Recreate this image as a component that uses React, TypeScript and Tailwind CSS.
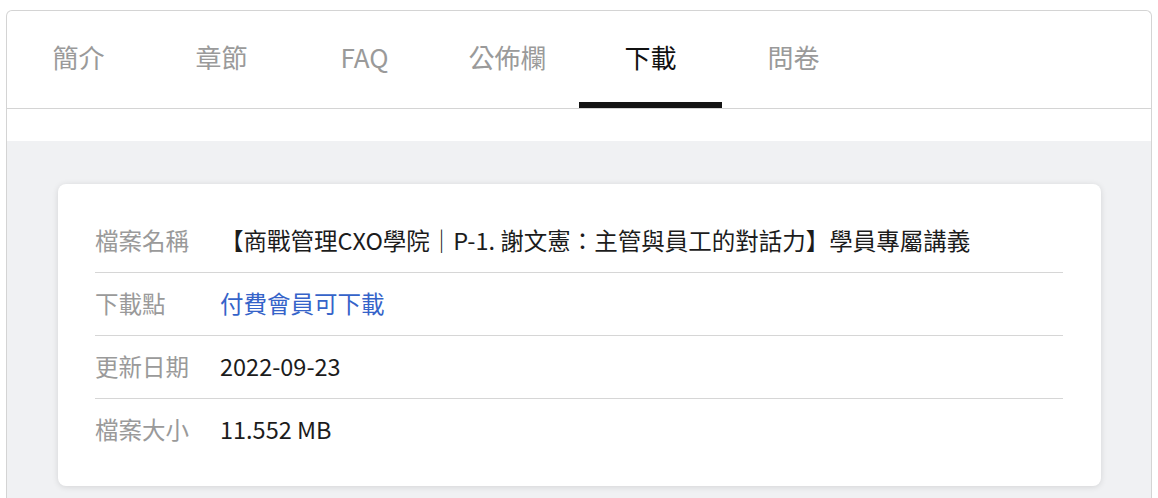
import React from "react";

const tabs = ["簡介", "章節", "FAQ", "公佈欄", "下載", "問卷"];

const rows = [
  { label: "檔案名稱", value: "【商戰管理CXO學院｜P-1. 謝文憲：主管與員工的對話力】學員專屬講義" },
  { label: "下載點", value: "付費會員可下載", link: true },
  { label: "更新日期", value: "2022-09-23" },
  { label: "檔案大小", value: "11.552 MB" },
];

const App = () => {
  return (
    <div
      className="min-h-screen bg-white px-[6px] pt-[10px]"
      style={{ fontFamily: '"Noto Sans CJK TC", "Noto Sans", sans-serif' }}
    >
      <div className="border border-b-0 border-[#d4d4d4] rounded-t-[6px] overflow-hidden">
        <div className="flex h-[98px] border-b border-[#d4d4d4]">
          {tabs.map((t) => {
            const active = t === "下載";
            return (
              <div
                key={t}
                className={
                  "relative w-[143px] flex items-center justify-center text-[26px] " +
                  (active ? "text-[#111]" : "text-[#9a9a9a]")
                }
              >
                <span className="-mt-[6px]">{t}</span>
                {active && <div className="absolute left-0 right-0 bottom-0 h-[6px] bg-[#141414]" />}
              </div>
            );
          })}
        </div>
        <div className="h-[32px] bg-white" />
        <div className="bg-[#f0f1f3] pl-[51px] pr-[50px] pt-[43px] pb-[40px]">
          <div className="bg-white rounded-[8px] shadow-[0_1px_6px_rgba(0,0,0,0.12)] pl-[37px] pr-[38px] pt-[26px] pb-[25px]">
            {rows.map((r, i) => (
              <div
                key={r.label}
                className={
                  "flex items-center h-[62px] text-[23.5px] " +
                  (i < rows.length - 1 ? "border-b border-[#d6d6d6] box-content" : "")
                }
              >
                <div className="w-[125px] shrink-0 text-[#9a9a9a] whitespace-nowrap">{r.label}</div>
                <div className={"whitespace-nowrap " + (r.link ? "text-[#3563c9]" : "text-[#1c1c1c]")}>
                  {r.value}
                </div>
              </div>
            ))}
          </div>
        </div>
      </div>
    </div>
  );
};

export default App;
